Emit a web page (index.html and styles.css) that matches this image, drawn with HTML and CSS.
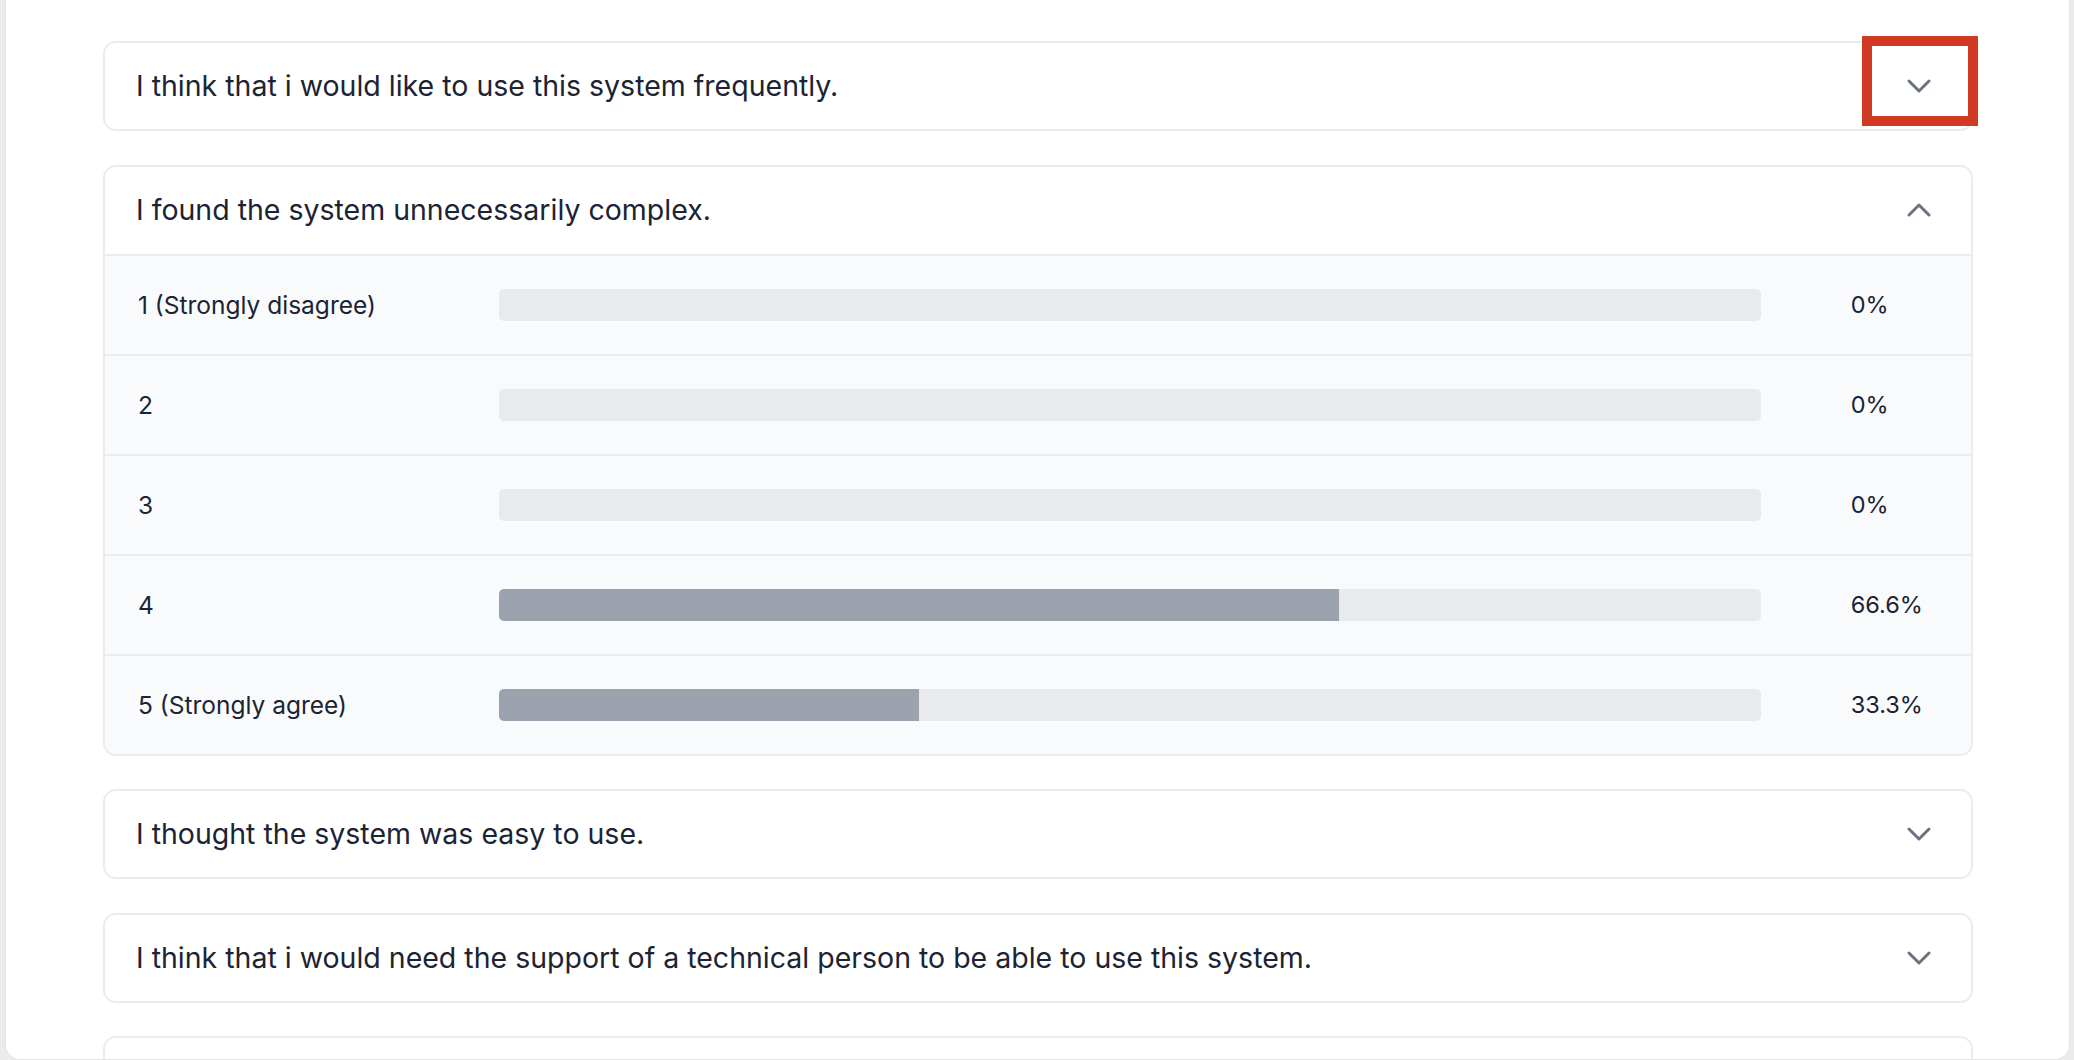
FILE: index.html
```html
<!DOCTYPE html>
<html lang="en">
<head>
<meta charset="utf-8">
<title>Survey results</title>
<link rel="stylesheet" href="styles.css">
</head>
<body>
<div class="panel">
  <div class="card">
    <div class="card-head">
      <span class="question">I think that i would like to use this system frequently.</span>
      <svg class="chev" viewBox="0 0 24 24" fill="none" stroke="currentColor" stroke-width="2.25"><path stroke-linecap="round" stroke-linejoin="round" d="M19.5 8.25l-7.5 7.5-7.5-7.5"/></svg>
    </div>
    <div class="highlight"></div>
  </div>

  <div class="card">
    <div class="card-head is-open">
      <span class="question">I found the system unnecessarily complex.</span>
      <svg class="chev" viewBox="0 0 24 24" fill="none" stroke="currentColor" stroke-width="2.25"><path stroke-linecap="round" stroke-linejoin="round" d="M4.5 15.75l7.5-7.5 7.5 7.5"/></svg>
    </div>
    <div class="rows">
      <div class="row">
        <span class="label">1 (Strongly disagree)</span>
        <div class="track"><div class="fill" style="width:0%"></div></div>
        <span class="pct">0%</span>
      </div>
      <div class="row">
        <span class="label">2</span>
        <div class="track"><div class="fill" style="width:0%"></div></div>
        <span class="pct">0%</span>
      </div>
      <div class="row">
        <span class="label">3</span>
        <div class="track"><div class="fill" style="width:0%"></div></div>
        <span class="pct">0%</span>
      </div>
      <div class="row">
        <span class="label">4</span>
        <div class="track"><div class="fill" style="width:66.6%"></div></div>
        <span class="pct">66.6%</span>
      </div>
      <div class="row">
        <span class="label">5 (Strongly agree)</span>
        <div class="track"><div class="fill" style="width:33.3%"></div></div>
        <span class="pct">33.3%</span>
      </div>
    </div>
  </div>

  <div class="card">
    <div class="card-head">
      <span class="question">I thought the system was easy to use.</span>
      <svg class="chev" viewBox="0 0 24 24" fill="none" stroke="currentColor" stroke-width="2.25"><path stroke-linecap="round" stroke-linejoin="round" d="M19.5 8.25l-7.5 7.5-7.5-7.5"/></svg>
    </div>
  </div>

  <div class="card">
    <div class="card-head">
      <span class="question">I think that i would need the support of a technical person to be able to use this system.</span>
      <svg class="chev" viewBox="0 0 24 24" fill="none" stroke="currentColor" stroke-width="2.25"><path stroke-linecap="round" stroke-linejoin="round" d="M19.5 8.25l-7.5 7.5-7.5-7.5"/></svg>
    </div>
  </div>

  <div class="card">
    <div class="card-head"></div>
  </div>
</div>
</body>
</html>
```
FILE: styles.css
```css
* { box-sizing: border-box; }

html, body {
  margin: 0;
  padding: 0;
  height: 100%;
  overflow: hidden;
}

body {
  background: #ebebeb;
  font-family: "Inter", "Noto Sans", sans-serif;
  color: #1c2433;
  padding: 0 5px 0 6px;
}

.panel {
  background: #ffffff;
  height: 1059px;
  border-radius: 0 0 14px 14px;
  overflow: hidden;
  padding: 41px 96px 0 97px;
  display: flex;
  flex-direction: column;
  gap: 33.5px;
  box-shadow: 0 0 0 1px #e3e3e3;
}

.card {
  position: relative;
  flex: none;
  border: 2px solid #ebecf0;
  border-radius: 13px;
  background: #ffffff;
}

.card-head {
  display: flex;
  align-items: center;
  justify-content: space-between;
  height: 86px;
  padding: 0 36px 0 31px;
}

.card-head.is-open {
  height: 87px;
  border-bottom: 2px solid #ebecf0;
  box-sizing: content-box;
}

.question {
  font-size: 28.5px;
  line-height: 36px;
  color: #1c2433;
  white-space: nowrap;
}

.chev {
  width: 32px;
  height: 32px;
  color: #6b7280;
  flex: none;
}

.highlight {
  position: absolute;
  top: -7px;
  right: -7px;
  width: 116px;
  height: 90px;
  border: 10px solid #d13a22;
}

.rows {
  background: #f9fafb;
  border-radius: 0 0 11px 11px;
}

.row {
  display: grid;
  grid-template-columns: 20% 70% 10%;
  align-items: center;
  height: 98px;
  padding: 0 30px 0 33px;
}

.row + .row {
  height: 100px;
  border-top: 2px solid #ebecf0;
}

.label {
  font-size: 24.5px;
  line-height: 30px;
  color: #1c2433;
  white-space: nowrap;
}

.track {
  height: 32px;
  background: #e9eaee;
  border-radius: 5px;
  overflow: hidden;
}

.fill {
  height: 100%;
  background: #9ca3af;
}

.pct {
  font-size: 23.5px;
  line-height: 30px;
  padding-left: 90px;
  color: #1c2433;
  white-space: nowrap;
}
```
